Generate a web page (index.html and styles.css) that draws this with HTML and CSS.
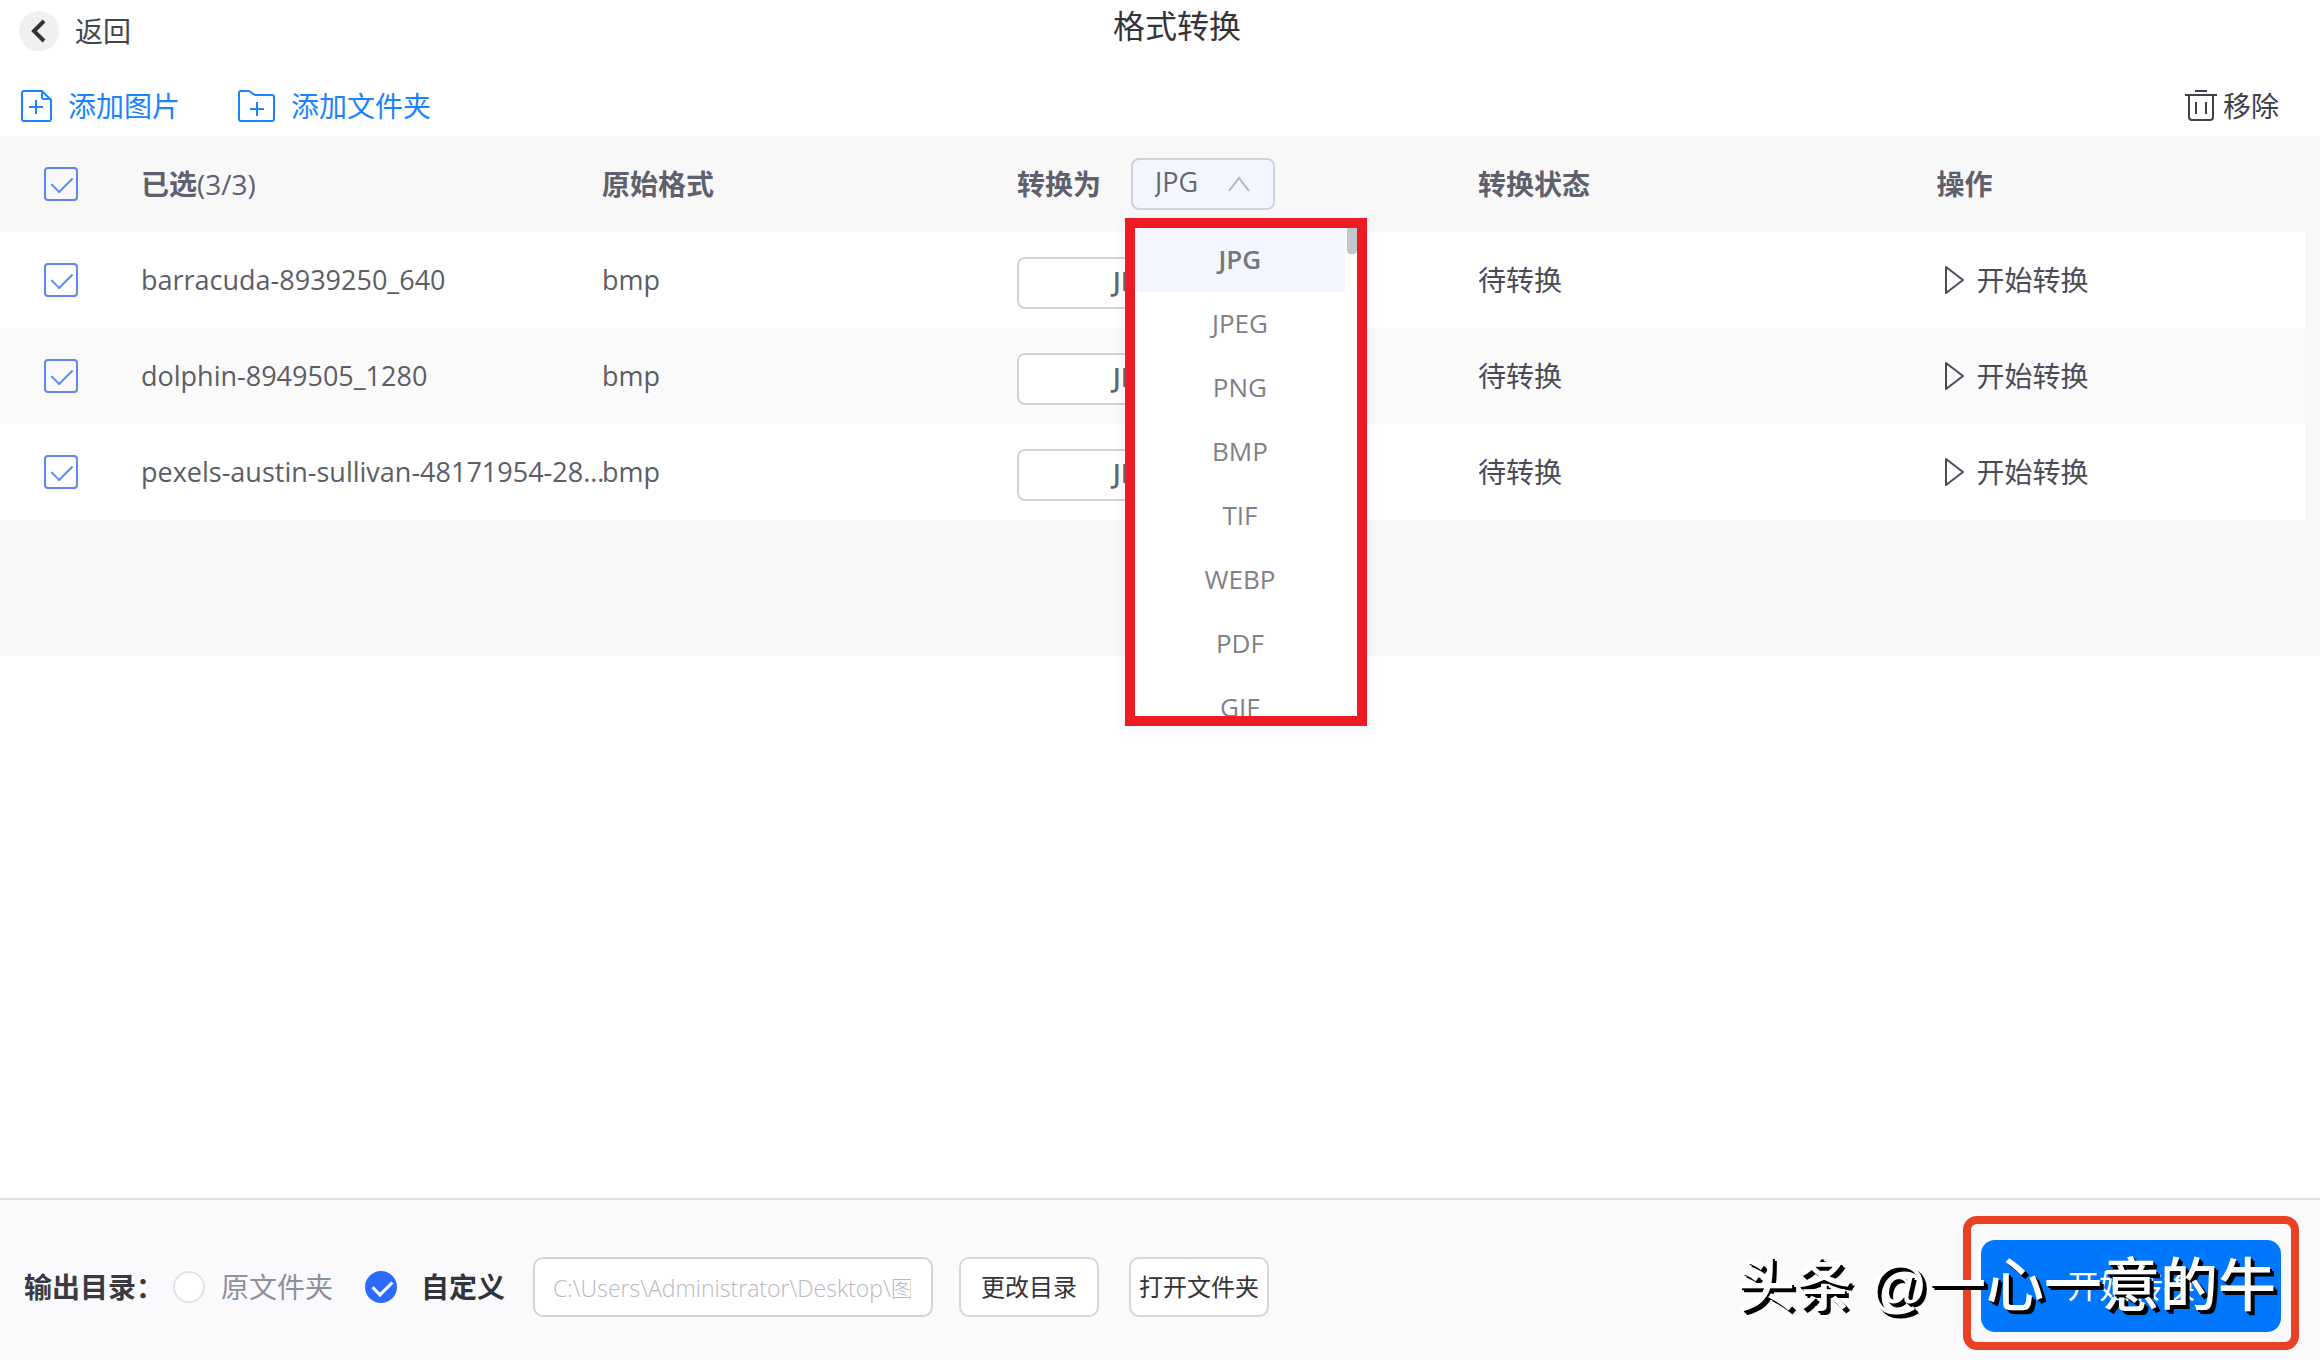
FILE: index.html
```html
<!DOCTYPE html>
<html lang="zh-CN">
<head>
    <meta charset="UTF-8">
    <meta name="viewport" content="width=device-width, initial-scale=1.0">
    <title>格式转换</title>
    <link rel="stylesheet" href="styles.css">
</head>
<body>

    <header class="top-bar">
        <button class="back-button" type="button">
            <span class="back-circle">
                <svg width="16" height="24" viewBox="0 0 16 24"><path d="M13 2 3 12l10 10" fill="none" stroke="#333" stroke-width="4"/></svg>
            </span>
            返回
        </button>
        <h1>格式转换</h1>
    </header>

    <div class="toolbar">
        <button class="tool-button" type="button">
            <svg width="32" height="34" viewBox="0 0 32 34" fill="none" stroke="currentColor" stroke-width="2">
                <path d="M22 2H4a2 2 0 0 0-2 2v26a2 2 0 0 0 2 2h25a2 2 0 0 0 2-2V11z"/>
                <path d="M22 2v6a2 2 0 0 0 2 2h7M9 18h14M16 11v14"/>
            </svg>
            添加图片
        </button>
        <button class="tool-button" type="button">
            <svg width="38" height="34" viewBox="0 0 38 34" fill="none" stroke="currentColor" stroke-width="2">
                <path d="M4 2h8l6 4h17a2 2 0 0 1 2 2v22a2 2 0 0 1-2 2H4a2 2 0 0 1-2-2V4a2 2 0 0 1 2-2zM13 20h14M20 13v14"/>
            </svg>
            添加文件夹
        </button>
        <button class="remove-button" type="button">
            <svg width="32" height="34" viewBox="0 0 32 34" fill="none" stroke="currentColor" stroke-width="2">
                <path d="M10 2h12M0 6h32M4 6v22a3 3 0 0 0 3 3h18a3 3 0 0 0 3-3V6M11 13v12M21 13v12"/>
            </svg>
            移除
        </button>
    </div>

    <main class="file-list">
        <table>
            <colgroup>
                <col class="col-check">
                <col class="col-name">
                <col class="col-format">
                <col class="col-target">
                <col class="col-status">
                <col>
            </colgroup>
            <thead>
                <tr>
                    <th class="check-cell"><input type="checkbox" aria-label="全选" checked></th>
                    <th>已选<span class="count">(3/3)</span></th>
                    <th>原始格式</th>
                    <th>
                        <div class="target-head">
                            <label for="targetFormat">转换为</label>
                            <div class="format-picker">
                                <select id="targetFormat">
                                    <option>JPG</option>
                                </select>
                                <svg class="arrow" width="22" height="16" viewBox="0 0 22 16"><path d="M1 15 11 2l10 13" fill="none" stroke="#b4b7be" stroke-width="2"/></svg>
                                <!-- Open format menu -->
                                <ul class="format-menu" role="listbox" aria-label="转换为">
                                    <li class="selected" role="option" aria-selected="true">JPG</li>
                                    <li role="option">JPEG</li>
                                    <li role="option">PNG</li>
                                    <li role="option">BMP</li>
                                    <li role="option">TIF</li>
                                    <li role="option">WEBP</li>
                                    <li role="option">PDF</li>
                                    <li role="option">GIF</li>
                                </ul>
                            </div>
                        </div>
                    </th>
                    <th>转换状态</th>
                    <th>操作</th>
                </tr>
            </thead>
            <tbody>
                <tr>
                    <td class="check-cell"><input type="checkbox" aria-label="barracuda-8939250_640" checked></td>
                    <td class="latin">barracuda-8939250_640</td>
                    <td class="latin">bmp</td>
                    <td><select class="row-select" aria-label="转换为"><option>JPG</option></select></td>
                    <td>待转换</td>
                    <td>
                        <button class="start-button" type="button">
                            <svg width="20" height="30" viewBox="0 0 20 30"><path d="M2 2v26l17-13z" fill="none" stroke="currentColor" stroke-width="2" stroke-linejoin="round"/></svg>
                            开始转换
                        </button>
                    </td>
                </tr>
                <tr>
                    <td class="check-cell"><input type="checkbox" aria-label="dolphin-8949505_1280" checked></td>
                    <td class="latin">dolphin-8949505_1280</td>
                    <td class="latin">bmp</td>
                    <td><select class="row-select" aria-label="转换为"><option>JPG</option></select></td>
                    <td>待转换</td>
                    <td>
                        <button class="start-button" type="button">
                            <svg width="20" height="30" viewBox="0 0 20 30"><path d="M2 2v26l17-13z" fill="none" stroke="currentColor" stroke-width="2" stroke-linejoin="round"/></svg>
                            开始转换
                        </button>
                    </td>
                </tr>
                <tr>
                    <td class="check-cell"><input type="checkbox" aria-label="pexels-austin-sullivan-48171954-28..." checked></td>
                    <td class="latin">pexels-austin-sullivan-48171954-28...</td>
                    <td class="latin">bmp</td>
                    <td><select class="row-select" aria-label="转换为"><option>JPG</option></select></td>
                    <td>待转换</td>
                    <td>
                        <button class="start-button" type="button">
                            <svg width="20" height="30" viewBox="0 0 20 30"><path d="M2 2v26l17-13z" fill="none" stroke="currentColor" stroke-width="2" stroke-linejoin="round"/></svg>
                            开始转换
                        </button>
                    </td>
                </tr>
            </tbody>
        </table>
    </main>

    <footer class="bottom-bar">
        <div class="output-options">
            <span class="output-label">输出目录：</span>
            <label class="radio-label"><input type="radio" name="output">原文件夹</label>
            <label class="radio-label custom"><input type="radio" name="output" checked>自定义</label>
            <input class="path-input" type="text" aria-label="输出目录" value="C:\Users\Administrator\Desktop\图片">
            <button class="dir-button" type="button">更改目录</button>
            <button class="dir-button" type="button">打开文件夹</button>
        </div>
        <div class="convert-frame">
            <button class="convert-button" type="button">开始转换</button>
        </div>
        <div class="watermark">头条 @一心一意的牛</div>
    </footer>

</body>
</html>
```
FILE: styles.css
```css
* {
    box-sizing: border-box;
}
body {
    margin: 0;
    min-height: 100vh;
    display: flex;
    flex-direction: column;
    font-family: "Open Sans", "Noto Sans CJK SC", sans-serif;
    font-size: 28px;
    line-height: 40px;
    color: #4a4b57;
    background-color: #fff;
}
button, select, input {
    font: inherit;
    color: inherit;
    margin: 0;
}
button {
    display: flex;
    align-items: center;
    justify-content: center;
    padding: 0;
    border: none;
    background: none;
    white-space: nowrap;
    cursor: pointer;
}
svg {
    flex: none;
}

/* Top bar */
.top-bar {
    display: grid;
    grid-template-columns: 1fr auto 1fr;
    height: 76px;
    padding: 6px 0 0 19px;
}
.back-button {
    justify-self: start;
    gap: 16px;
    height: 50px;
    color: #44454c;
}
.back-circle {
    display: flex;
    align-items: center;
    justify-content: center;
    width: 40px;
    height: 40px;
    border-radius: 50%;
    background-color: #f0f0f2;
}
h1 {
    margin: 0;
    padding-left: 15px;
    font-size: 32px;
    font-weight: normal;
    color: #33343a;
}

.toolbar {
    display: flex;
    gap: 57px;
    height: 60px;
    padding: 0 41px 0 20px;
}
.tool-button {
    gap: 16px;
    color: #1a84ff;
}
.remove-button {
    gap: 6px;
    margin-left: auto;
    color: #3e3f48;
}

/* File table */
.file-list {
    height: 520px;
    padding-right: 15px;
    background-color: #f8f8f8;
}
table {
    width: 100%;
    table-layout: fixed;
    border-collapse: collapse;
}
.col-check { width: 141px; }
.col-name { width: 20%; }
.col-format { width: 18%; }
.col-target { width: 20%; }
.col-status { width: 19.9%; }
th, td {
    height: 96px;
    padding: 0;
    text-align: left;
    white-space: nowrap;
}
th {
    color: #5f606e;
}
.count {
    font-weight: 500;
}
tbody tr {
    background-color: #fff;
}
tbody tr:nth-child(even) {
    background-color: #fafafa;
}
.latin {
    font-size: 27px;
    color: #5c5d66;
}
.check-cell {
    padding-left: 44px;
}
input[type="checkbox"] {
    appearance: none;
    display: block;
    width: 34px;
    height: 34px;
    border: 2px solid #5b86f7;
    border-radius: 4px;
}
/* Tick is two sides of a rotated box */
input[type="checkbox"]:checked::after {
    content: "";
    display: block;
    width: 18px;
    height: 10px;
    margin: 7px 0 0 6px;
    border: solid #5b86f7;
    border-width: 0 0 2px 2px;
    transform: rotate(-45deg);
}
select {
    appearance: none;
    height: 52px;
    border: 2px solid #cfd2d9;
    border-radius: 8px;
    background-color: #fff;
    font-size: 27px;
    font-weight: 600;
    color: #66676f;
}
.target-head {
    display: flex;
    align-items: center;
    gap: 30px;
}
.format-picker {
    display: flex;
    align-items: center;
    position: relative;
}
.format-picker select {
    width: 144px;
    padding: 0 0 4px 22px;
    background-color: #f3f6ff;
    font-weight: 500;
}
.arrow {
    position: absolute;
    right: 25px;
    top: 18px;
}
.row-select {
    display: block;
    width: 236px;
    margin-top: 6px;
    padding: 0 0 4px;
    text-align: center;
    text-align-last: center;
}
.format-menu {
    position: absolute;
    left: -6px;
    top: 60px;
    z-index: 2;
    width: 242px;
    height: 508px;
    margin: 0;
    padding: 0 12px 0 0;
    overflow: hidden;
    border: 10px solid #ed1c24;
    background-color: #fff;
    box-shadow: 0 4px 16px rgba(0, 0, 0, 0.05);
    list-style: none;
    font-size: 26px;
    font-weight: normal;
    line-height: 62px;
    text-align: center;
    color: #808187;
}
.format-menu li {
    height: 64px;
}
/* Scrollbar thumb */
.format-menu::after {
    content: "";
    position: absolute;
    right: 0;
    top: 0;
    width: 10px;
    height: 26px;
    border-radius: 0 0 4px 4px;
    background-color: #c3c6cc;
}
.format-menu .selected {
    background-color: #f3f6ff;
    font-weight: 600;
    color: #74757d;
}
.start-button {
    gap: 13px;
    padding-left: 7px;
}

/* Bottom bar */
.bottom-bar {
    position: relative;
    display: flex;
    align-items: center;
    justify-content: space-between;
    margin-top: auto;
    padding: 16px 21px 10px 24px;
    border-top: 2px solid #dde0ea;
    background-color: #fafafd;
}
.output-options {
    display: flex;
    align-items: center;
    padding-top: 8px;
}
.output-label {
    width: 149px;
    white-space: nowrap;
    font-weight: bold;
    color: #3a3b42;
}
.radio-label {
    display: flex;
    align-items: center;
    gap: 16px;
    margin-right: 32px;
    color: #8f9099;
}
.radio-label.custom {
    gap: 24px;
    margin-right: 28px;
    font-weight: bold;
    color: #33343a;
}
input[type="radio"] {
    appearance: none;
    width: 32px;
    height: 32px;
    border: 2px solid #e2e3e8;
    border-radius: 50%;
    background-color: #fff;
}
input[type="radio"]:checked {
    border-color: #2b6cff;
    background-color: #2b6cff;
}
input[type="radio"]:checked::after {
    content: "";
    display: block;
    width: 16px;
    height: 9px;
    margin: 7px 0 0 6px;
    border: solid #fff;
    border-width: 0 0 3px 3px;
    transform: rotate(-45deg);
}
.path-input {
    width: 400px;
    height: 60px;
    padding: 0 20px 0 18px;
    border: 2px solid #d2d3d6;
    border-radius: 10px;
    background-color: #fff;
    font-size: 23px;
    font-weight: 300;
    color: #b8b9bd;
}
.dir-button {
    width: 140px;
    height: 60px;
    margin-left: 26px;
    border: 2px solid #d6d7da;
    border-radius: 10px;
    background-color: #fff;
    font-size: 24px;
    color: #33343a;
}
.dir-button + .dir-button {
    margin-left: 30px;
}
.convert-frame {
    padding: 16px 10px 10px;
    border: 8px solid #ea4126;
    border-radius: 14px;
}
.convert-button {
    width: 300px;
    height: 92px;
    border-radius: 14px;
    background-color: #0077ff;
    font-size: 32px;
    color: #fff;
}
.watermark {
    position: absolute;
    right: 44px;
    top: 46px;
    font-family: "Liberation Sans", "Noto Sans CJK SC", sans-serif;
    font-size: 58px;
    font-weight: 500;
    line-height: 80px;
    white-space: nowrap;
    color: #fff;
    text-shadow: 2px 2px 0 #000, 4px 4px 0 #000;
    pointer-events: none;
}
```
